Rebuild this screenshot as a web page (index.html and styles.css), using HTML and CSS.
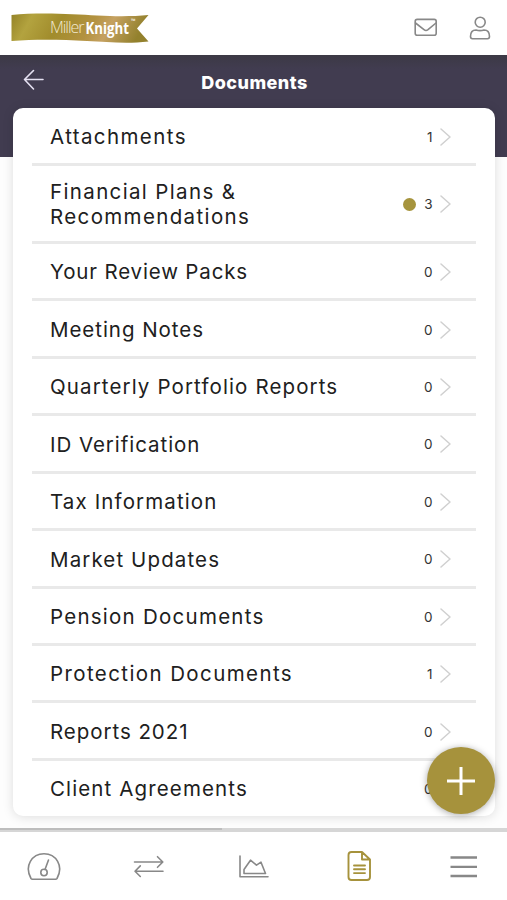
FILE: index.html
```html
<!DOCTYPE html>
<html lang="en">
<head>
<meta charset="utf-8">
<meta name="viewport" content="width=device-width">
<title>Documents</title>
<link rel="stylesheet" href="styles.css">
</head>
<body>
<div class="app">
  <header class="topbar">
    <svg class="logo" width="140" height="30" viewBox="0 0 140 30" aria-label="MillerKnight">
      <defs><linearGradient id="gold" x1="0" y1="0" x2="1" y2=".12">
        <stop offset="0" stop-color="#948327"/><stop offset=".16" stop-color="#b3a33f"/><stop offset=".38" stop-color="#a18c2c"/><stop offset=".62" stop-color="#b39240"/><stop offset=".76" stop-color="#c5a161"/><stop offset="1" stop-color="#93812d"/>
      </linearGradient></defs>
      <path d="M.5 2C28-1 62 1 86 2.500C106 3.500 122 3.500 137.500 2L126 15.500L137.500 28.500C116 31 96 29 76 28C50 26.500 25 26 .5 28Z" fill="url(#gold)"/>
      <text x="39" y="19.700" class="logo-light" textLength="34.500">Miller</text>
      <text x="74.500" y="20.700" class="logo-bold" textLength="43.500" lengthAdjust="spacingAndGlyphs">Knight</text>
      <text x="120" y="10" class="logo-tm">™</text>
    </svg>
    <div class="actions">
      <svg width="24" height="20" viewBox="0 0 24 20"><rect x="1.200" y="1.400" width="21" height="15.800" rx="2"/><path d="M1.500 5L10 11.700Q12 13.300 14 11.700L22 5"/></svg>
      <svg width="22" height="24" viewBox="0 0 22 24"><circle cx="11.200" cy="6.200" r="5"/><path d="M3.500 22.700Q1.500 22.700 1.500 20.500Q1.500 14 7 14Q11 15.200 15 14Q20.500 14 20.500 20.500Q20.500 22.700 18.500 22.700Z"/></svg>
    </div>
  </header>
  <div class="banner">
    <svg class="back" width="22" height="22" viewBox="0 0 22 22"><path d="M20 10.500H1.500M10.500 1.500L1.500 10.500L10.500 20"/></svg>
    <h1>Documents</h1>
  </div>
  <main class="content">
    <ul class="card">
      <li class="row first"><span class="label ls-xl">Attachments</span><span class="count">1</span><svg class="chev" viewBox="0 0 11 18"><path d="M1 1L10 9L1 17"/></svg></li>
      <li class="row tall"><span class="label ls-xl">Financial Plans &amp;<br>Recommendations</span><i class="dot"></i><span class="count">3</span><svg class="chev" viewBox="0 0 11 18"><path d="M1 1L10 9L1 17"/></svg></li>
      <li class="row"><span class="label ls-xs">Your Review Packs</span><span class="count">0</span><svg class="chev" viewBox="0 0 11 18"><path d="M1 1L10 9L1 17"/></svg></li>
      <li class="row"><span class="label">Meeting Notes</span><span class="count">0</span><svg class="chev" viewBox="0 0 11 18"><path d="M1 1L10 9L1 17"/></svg></li>
      <li class="row"><span class="label ls-m">Quarterly Portfolio Reports</span><span class="count">0</span><svg class="chev" viewBox="0 0 11 18"><path d="M1 1L10 9L1 17"/></svg></li>
      <li class="row"><span class="label">ID Verification</span><span class="count">0</span><svg class="chev" viewBox="0 0 11 18"><path d="M1 1L10 9L1 17"/></svg></li>
      <li class="row"><span class="label ls-m">Tax Information</span><span class="count">0</span><svg class="chev" viewBox="0 0 11 18"><path d="M1 1L10 9L1 17"/></svg></li>
      <li class="row"><span class="label ls-m">Market Updates</span><span class="count">0</span><svg class="chev" viewBox="0 0 11 18"><path d="M1 1L10 9L1 17"/></svg></li>
      <li class="row"><span class="label ls-l">Pension Documents</span><span class="count">0</span><svg class="chev" viewBox="0 0 11 18"><path d="M1 1L10 9L1 17"/></svg></li>
      <li class="row"><span class="label ls-xl">Protection Documents</span><span class="count">1</span><svg class="chev" viewBox="0 0 11 18"><path d="M1 1L10 9L1 17"/></svg></li>
      <li class="row"><span class="label">Reports 2021</span><span class="count">0</span><svg class="chev" viewBox="0 0 11 18"><path d="M1 1L10 9L1 17"/></svg></li>
      <li class="row last"><span class="label ls-m">Client Agreements</span><span class="count">0</span><svg class="chev" viewBox="0 0 11 18"><path d="M1 1L10 9L1 17"/></svg></li>
    </ul>
  </main>
  <button class="fab" aria-label="Add"><svg width="30" height="30" viewBox="0 0 30 30"><path d="M15 1V29M1 15H29"/></svg></button>
  <nav class="tabs">
    <svg width="36" height="30" viewBox="0 0 36 30"><path d="M5 27.500C-2 15 6 2.800 18 2.800S38 15 31 27.500Q30.500 28.200 29.500 28.200H6.500Q5.500 28.200 5 27.500Z"/><circle cx="18" cy="21.500" r="3.200"/><path d="M19 18.500L22.500 9"/></svg>
    <svg width="36" height="30" viewBox="0 0 36 30"><path d="M3.500 11H31.500M26.500 5.700L31.800 11L26.500 16.300M32 20.200H4M9.300 14.900L4 20.200L9.300 25.500"/></svg>
    <svg width="36" height="30" viewBox="0 0 36 30"><path d="M4 5V25.800H32"/><path d="M8 22.500V18.500L14.500 9.200L20.500 14.200L25 11.200L29.500 22.500Z"/></svg>
    <svg class="active" width="36" height="32" viewBox="0 0 36 32"><path d="M21 2H10.500Q7.500 2 7.500 5V27Q7.500 30 10.500 30H26Q29 30 29 27V9.500ZM21 2V9.500H29M13 15.500H24M13 19.300H24M13 23.100H24"/></svg>
    <svg width="36" height="30" viewBox="0 0 36 30"><path d="M4.500 6.500H31M4.500 15.800H31M4.500 25H31" class="menu"/></svg>
  </nav>
</div>
</body>
</html>
```
FILE: styles.css
```css
* { box-sizing: border-box; }
body { margin: 0; background: #fff; color: #202020; font-family: Inter, "Liberation Sans", sans-serif; }
.app { position: relative; display: flex; flex-direction: column; height: 900px; overflow: hidden; background: #fdfdfd; }
svg { fill: none; stroke: #888; stroke-width: 1.6; stroke-linejoin: round; stroke-linecap: round; flex: none; }
.topbar { display: flex; justify-content: space-between; align-items: center; height: 55px; padding: 0 16px 0 11px; flex: none; background: #fff; }
.logo { stroke: none; }
.logo text { fill: #fff; font-family: "Open Sans", sans-serif; font-size: 16px; }
.logo .logo-light { font-weight: 300; fill: #f2e9cf; }
.logo .logo-bold { font-size: 15.500px; font-weight: 700; }
.logo .logo-tm { font-size: 6px; }
.actions { display: flex; align-items: center; gap: 31px; }
.banner { height: 102px; flex: none; background: linear-gradient(#3c3945, #413c50 14px); display: grid; grid-template-columns: 46px 1fr 46px; align-items: start; }
.back { stroke: #e5e1f2; margin: 14px 0 0 23px; }
h1 { margin: 17px 0 0 2px; font-size: 18px; line-height: 22px; font-weight: 800; color: #fff; text-align: center; letter-spacing: .45px; }
.content { margin-top: -49px; padding: 0 12px 0 13px; }
.card { list-style: none; margin: 0; padding: 0 19px; height: 707.500px; background: #fff; border-radius: 10px; box-shadow: 0 1px 11px rgba(0,0,0,.13); }
.row { display: flex; align-items: center; height: 57.430px; border-bottom: 3px solid #e9e9e9; padding: 2px 25px 0 18px; }
.first { padding-top: 3px; height: 58px; }
.tall { height: 78px; padding-top: 1px; }
.last { border: 0; height: 55px; padding-top: 1px; }
.label { margin-right: auto; font-size: 20.500px; line-height: 25.500px; letter-spacing: .95px; white-space: nowrap; }
.ls-xs { letter-spacing: .84px; }
.ls-m { letter-spacing: 1.120px; }
.ls-l { letter-spacing: 1.250px; }
.ls-xl { letter-spacing: 1.400px; }
.tall .ls-xl { letter-spacing: 1.360px; }
.count { font-size: 13.500px; letter-spacing: .5px; color: #333; }
.chev { width: 11px; height: 18px; margin-left: 7px; stroke: #d0d0d0; stroke-width: 1.5; }
.dot { width: 13px; height: 13px; border-radius: 50%; background: #a6943d; margin-right: 8px; }
.fab { position: absolute; left: 427px; top: 747px; width: 68px; height: 67px; border: 0; padding: 0; border-radius: 50%; background: #a6923c; display: grid; place-items: center; box-shadow: 0 1px 7px rgba(0,0,0,.35); }
.fab svg { stroke: #fff; stroke-width: 3; stroke-linecap: butt; }
.tabs { position: relative; margin-top: auto; height: 72px; flex: none; background: #fff; border-top: 4px solid #d6d6d6; display: flex; justify-content: space-between; align-items: center; padding: 0 25px 0 26px; }
.tabs::before { content: ""; position: absolute; left: 0; top: -4px; width: 222px; height: 2px; background: #bdbdbd; }
.tabs .active { stroke: #a6923c; stroke-width: 1.9; }
.menu { stroke-width: 2.300; stroke-linecap: butt; }
```
